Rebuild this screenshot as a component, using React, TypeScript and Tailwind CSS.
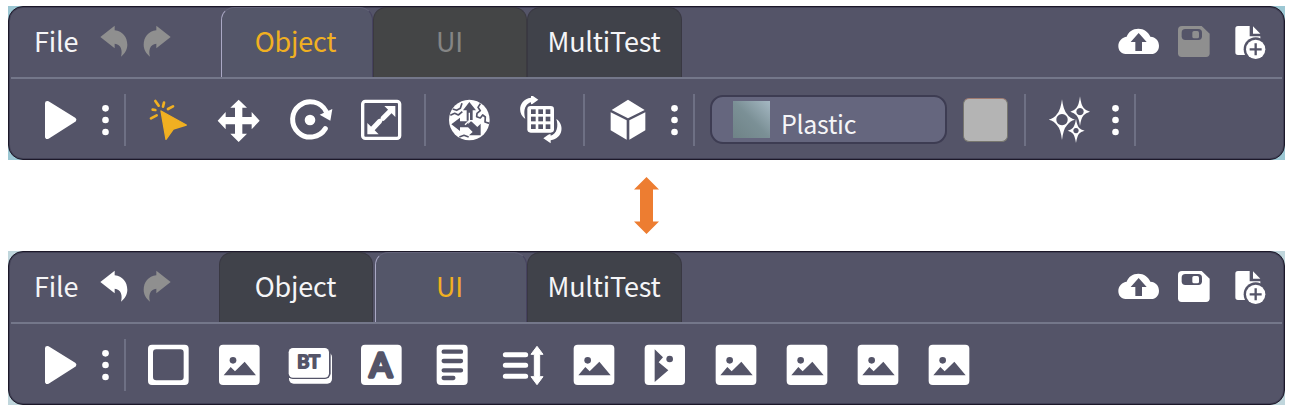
import type { ReactNode } from "react";

const BG = "#545468";

function Undo({ className = "" }: { className?: string }) {
  return (
    <svg className={`h-10 w-10 shrink-0 ${className}`} viewBox="282 66 120 120" fill="currentColor">
      <path d="M301 111 L344 77 V91 C368 93 382 112 382 134 C382 149 374 161 363 170 C368 152 364 133 344 131 V145 Z" />
    </svg>
  );
}

function HeadIcon({ x, children, className = "" }: { x: number; children: ReactNode; className?: string }) {
  return (
    <svg className={`size-12 shrink-0 ${className}`} viewBox={`${x} 54 144 144`} fill="currentColor">
      {children}
    </svg>
  );
}

function Cloud() {
  return (
    <HeadIcon x={42} className="text-white">
      <path d="M77 162 C63 162 55 151 55 138 C55 122 67 112 80 110 C85 95 98 86 115 86 C132 86 145 96 151 110 C167 111 177 122 177 137 C177 152 167 162 154 162 Z" />
      <path fill={BG} d="M116 99 L140 126 H126 V153 H106 V126 H92 Z" />
    </HeadIcon>
  );
}

function Save({ className }: { className: string }) {
  return (
    <HeadIcon x={210} className={className}>
      <path d="M246 78 H305 L329 101 V160 Q329 171 318 171 H245 Q234 171 234 160 V90 Q234 78 246 78 Z" />
      <rect x="245" y="87" width="61" height="33" rx="11" fill={BG} />
      <rect x="277" y="93" width="20" height="22" rx="5" />
    </HeadIcon>
  );
}

function NewFile() {
  return (
    <HeadIcon x={378} className="text-white">
      <path d="M414 78 H449 V109 H481 V165 H414 Q406 165 406 157 V86 Q406 78 414 78 Z" />
      <path d="M459 79 L481 101 H459 Z" />
      <circle cx="467" cy="148" r="36" fill={BG} />
      <circle cx="467" cy="148" r="29" />
      <path d="M467 130 V166 M449 148 H485" stroke={BG} strokeWidth="7" />
    </HeadIcon>
  );
}

function Tool({ x, children, className = "text-white" }: { x: number; children: ReactNode; className?: string }) {
  return (
    <svg className={`h-12 w-[71px] shrink-0 ${className}`} viewBox={`${x} 288 213 144`} fill="currentColor">
      {children}
    </svg>
  );
}

function Play() {
  return (
    <svg className="ml-[27px] size-12 shrink-0 text-white" viewBox="108 288 144 144" fill="currentColor" stroke="currentColor">
      <path d="M142 310 L222 359 L142 410 Z" strokeWidth="14" strokeLinejoin="round" />
    </svg>
  );
}

function Dots({ className }: { className: string }) {
  return (
    <svg className={`h-12 w-[11px] shrink-0 text-white ${className}`} viewBox="0 0 33 144" fill="currentColor">
      <circle cx="16.5" cy="37" r="10" />
      <circle cx="16.5" cy="72" r="10" />
      <circle cx="16.5" cy="108" r="10" />
    </svg>
  );
}

function Sep({ className }: { className: string }) {
  return <div className={`h-[52px] w-[2px] shrink-0 bg-[#6e7084] ${className}`} />;
}

function Cursor() {
  return (
    <Tool x={399} className="text-[#f1b021]">
      <path d="M483 333 L559 375 L520 387 L498 418 Z" stroke="currentColor" strokeWidth="4" strokeLinejoin="round" />
      <path
        d="M466 303 L476 317 M492 308 L489 320 M519 319 L504 327 M458 329 L466 330 M453 355 L470 346"
        stroke="currentColor"
        strokeWidth="8"
        strokeLinecap="round"
      />
    </Tool>
  );
}

function Move() {
  return (
    <Tool x={-18}>
      <path d="M86 299 L111 323 H97 V351 H125 V336 L149 362 L125 388 V373 H97 V401 H111 L86 426 L61 401 H75 V373 H47 V388 L23 362 L47 336 V351 H75 V323 H61 Z" />
    </Tool>
  );
}

function Rotate() {
  return (
    <Tool x={195}>
      <path d="M346 386 A53 53 0 1 1 348 334" fill="none" stroke="currentColor" strokeWidth="15" strokeLinecap="round" />
      <path d="M329 344 L367 327 L361 362 Z" />
      <circle cx="300" cy="360" r="16" />
    </Tool>
  );
}

function Scale() {
  return (
    <Tool x={408}>
      <rect x="458" y="304" width="111" height="111" rx="8" fill="none" stroke="currentColor" strokeWidth="10" />
      <path d="M556 318 V351 L523 318 Z M472 403 V369 L506 403 Z" />
      <path d="M543 331 L519 355 M509 364 L485 389" stroke="currentColor" strokeWidth="15" strokeLinecap="round" />
    </Tool>
  );
}

function Globe() {
  return (
    <Tool x={12}>
      <circle cx="118" cy="360" r="61" />
      <g fill="none" stroke={BG} strokeWidth="5" strokeLinejoin="round">
        <path d="M68 327 L80 331 L91 325 L96 310" />
        <path d="M61 346 L74 340 L85 345 L97 335" />
        <path d="M151 311 L144 322 L151 332 L141 340 L140 350 L151 354 L158 345 L166 351 L165 366 L178 370" />
        <path d="M88 411 L102 406 L116 411" />
      </g>
      <g fill={BG}>
        <path d="M118 306 L138 331 H128 V362 H110 V331 H99 Z" />
        <path d="M64 373 L90 353 V364 H115 V382 H90 V393 Z" />
        <path d="M123 363 L142 381 L152 371 V406 H117 L128 396 L110 377 Z" />
      </g>
      <path d="M118 338 V362 H140 M118 362 L105 374" fill="none" stroke="currentColor" strokeWidth="4" />
    </Tool>
  );
}

function GridRotate() {
  const arrow = "M286 357 C262 342 264 299 303 293 V284 L325 299 L303 315 V307 C284 312 279 336 286 357 Z";
  return (
    <Tool x={225}>
      <path d={arrow} />
      <path d={arrow} transform="rotate(180 332.5 357)" />
      <rect x="287" y="313" width="90" height="90" rx="14" fill={BG} />
      <rect x="292" y="318" width="80" height="80" rx="10" />
      {[303, 325, 347].map((x) =>
        [328, 350, 373].map((y) => <rect key={`${x}-${y}`} x={x} y={y} width="14" height="14" fill={BG} />),
      )}
    </Tool>
  );
}

function Cube() {
  return (
    <svg className="ml-[19px] size-12 shrink-0 text-white" viewBox="522 288 144 144" fill="currentColor">
      <path d="M594 299 L644 330 L594 355 L545 330 Z M542 337 L590 361 V419 L542 391 Z M598 361 L646 337 V391 L598 419 Z" />
    </svg>
  );
}

function Sparkles() {
  return (
    <svg className="ml-[19px] size-12 shrink-0 text-white" viewBox="315 48 144 144" fill="currentColor" fillRule="evenodd">
      <path d="M366 58 Q370 91 381 102 Q389 115 405 119 Q389 123 381 136 Q370 147 366 180 Q362 147 351 136 Q343 123 326 119 Q343 115 351 102 Q362 91 366 58 Z M366 102 a17 17 0 1 0 .1 0 Z" />
      <path d="M420 49 Q423 75 431 84 Q437 92 450 95 Q437 98 431 106 Q423 114 420 138 Q417 114 409 106 Q403 98 391 95 Q403 92 409 84 Q417 75 420 49 Z M420 84 a11 11 0 1 0 .1 0 Z" />
      <path d="M408 116 Q411 136 417 143 Q422 149 434 152 Q422 155 417 161 Q411 169 408 189 Q405 169 399 161 Q394 155 383 152 Q394 149 399 143 Q405 136 408 116 Z M408 144 a8 8 0 1 0 .1 0 Z" />
    </svg>
  );
}

function Frame() {
  return (
    <Tool x={399}>
      <path
        fillRule="evenodd"
        d="M456 299 H554 Q566 299 566 311 V408 Q566 420 554 420 H456 Q444 420 444 408 V311 Q444 299 456 299 Z M469 313 Q459 313 459 323 V396 Q459 406 469 406 H541 Q551 406 551 396 V323 Q551 313 541 313 Z"
      />
    </Tool>
  );
}

function Picture({ x = -18 }: { x?: number }) {
  return (
    <Tool x={x}>
      <rect x="27" y="299" width="122" height="121" rx="12" />
      <circle cx="69" cy="346" r="10" fill={BG} />
      <path fill={BG} d="M41 391 L62 366 L75 379 L104 350 L138 391 Z" />
    </Tool>
  );
}

function ButtonTool() {
  return (
    <Tool x={195}>
      <rect x="237" y="322" width="129" height="94" rx="14" />
      <rect x="231" y="304" width="131" height="98" rx="17" fill={BG} />
      <rect x="236" y="309" width="121" height="89" rx="13" />
      <text
        x="296"
        y="370"
        textAnchor="middle"
        textLength="68"
        lengthAdjust="spacingAndGlyphs"
        fill={BG}
        stroke={BG}
        strokeWidth="6"
        strokeLinejoin="round"
        className="font-['Lato',sans-serif] text-[51px] font-normal"
      >
        BT
      </text>
    </Tool>
  );
}

function TextTool() {
  return (
    <Tool x={408}>
      <rect x="453" y="299" width="122" height="121" rx="12" />
      <text
        x="512"
        y="396"
        textAnchor="middle"
        fill={BG}
        stroke={BG}
        strokeWidth="11"
        strokeLinejoin="round"
        className="font-['Lato',sans-serif] text-[100px] font-normal"
      >
        A
      </text>
    </Tool>
  );
}

function Doc() {
  return (
    <Tool x={-39}>
      <rect x="20" y="299" width="93" height="121" rx="12" />
      <path d="M41 320 H93 M41 348 H93 M41 376 H93 M41 399 H70" stroke={BG} strokeWidth="13" strokeLinecap="round" />
    </Tool>
  );
}

function Scroll() {
  return (
    <Tool x={174}>
      <path d="M226 329 H287 M226 361 H287 M226 394 H287" stroke="currentColor" strokeWidth="15" strokeLinecap="round" />
      <path d="M321 304 L339 328 H329 V395 H339 L321 419 L303 395 H313 V328 H303 Z" stroke="currentColor" strokeWidth="3" strokeLinejoin="round" />
    </Tool>
  );
}

function SidePicture() {
  return (
    <Tool x={600}>
      <rect x="644" y="299" width="121" height="121" rx="12" />
      <path fill={BG} d="M674 313 L699 337 L686 352 L715 376 L674 411 Z" />
      <circle cx="719" cy="342" r="10" fill={BG} />
    </Tool>
  );
}

type TabState = "active" | "normal" | "disabled";

function Tab({ label, state, width = "w-[154px]" }: { label: string; state: TabState; width?: string }) {
  const styles = {
    active: "border-l-[1.5px] border-t border-r border-l-[#aaa8c4] border-t-[#626178] border-r-[#46425f] bg-[#545669] text-[#f1b021]",
    normal: "border border-b-0 border-[#393842] bg-[#40424a] text-[#f5f5f7]",
    disabled: "border border-b-0 border-[#3b3a40] bg-[#444546] text-[#858585]",
  };
  const box = state === "active" ? "ml-[2px] w-[152px] pr-[3px]" : `${width} pr-[1px]`;
  return (
    <div
      className={`flex h-[70px] items-center justify-center rounded-t-[13px] pb-[5px] text-[27px] leading-none tracking-[-0.2px] ${box} ${styles[state]}`}
    >
      {label}
    </div>
  );
}

interface PanelProps {
  objectTab: TabState;
  uiTab: TabState;
  canEdit: boolean;
  corner: string;
  children: ReactNode;
}

function Panel({ objectTab, uiTab, canEdit, corner, children }: PanelProps) {
  return (
    <section className={`h-[154px] w-[1277px] ${corner}`}>
      <div className="flex h-full flex-col rounded-[15px] border border-[#1c1829] bg-[#545468] shadow-[inset_0_0_0_1px_#414055]">
        <header className="flex h-[70px] shrink-0 items-center">
          <span className="ml-[25px] w-[60px] pb-[3px] text-[27px] leading-none tracking-[-0.2px] text-[#f5f5f7]">File</span>
          <Undo className={canEdit ? "text-white" : "text-[#8f8f8f]"} />
          <Undo className="ml-[3px] -scale-x-100 text-[#8f8f8f]" />
          <nav className="ml-[42px] flex">
            <Tab label="Object" state={objectTab} />
            <Tab label="UI" state={uiTab} />
            <Tab label="MultiTest" state="normal" width="w-[155px]" />
          </nav>
          <div className="ml-auto flex gap-2 pr-[10px]">
            <Cloud />
            <Save className={canEdit ? "text-white" : "text-[#8f8f8f]"} />
            <NewFile />
          </div>
        </header>
        <div className="mx-[2px] h-[2px] shrink-0 bg-[#74778a]" />
        <div className="flex flex-1 items-center pt-[2px]">
          <Play />
          <Dots className="ml-4" />
          <Sep className="mr-[7px] ml-[13px]" />
          {children}
        </div>
      </div>
    </section>
  );
}

export default function App() {
  return (
    <main className="flex h-[416px] w-[1292px] flex-col items-start bg-white pt-[6px] pl-2 font-['Noto_Sans_CJK_KR',sans-serif]">
      <Panel objectTab="active" uiTab="disabled" canEdit={false} corner="bg-[#9cc7d3]">
        <Cursor />
        <Move />
        <Rotate />
        <Scale />
        <Sep className="mr-2 ml-[7px]" />
        <Globe />
        <GridRotate />
        <Sep className="ml-[7px]" />
        <Cube />
        <Dots className="ml-[17px]" />
        <Sep className="ml-[13px]" />
        <div className="mb-[1px] ml-[15px] flex h-[49px] w-[237px] items-center rounded-[13px] border-2 border-[#3d3c52] bg-[#65667e] pl-[21px]">
          <div className="size-[37px] bg-linear-to-bl from-[#a5b8c3] via-[#7b9096] to-[#6f8387]" />
          <span className="ml-[11px] pt-[7px] text-[25px] leading-none tracking-[-0.3px] text-[#f5f5f7]">Plastic</span>
        </div>
        <div className="ml-[16px] h-[44px] w-[45px] rounded-[6px] border border-[#77766f] border-t-[#a07b70] bg-[#b4b4b4]" />
        <Sep className="ml-4" />
        <Sparkles />
        <Dots className="ml-[17px]" />
        <Sep className="ml-[13px]" />
      </Panel>
      <svg className="my-[17px] ml-[625px] h-[57px] w-[27px]" viewBox="0 0 27 57" fill="#ed7d31">
        <path d="M13.5 0 L26 12.5 H20 V44.5 H26 L13.5 57 L1 44.5 H7 V12.5 H1 Z" />
      </svg>
      <Panel objectTab="normal" uiTab="active" canEdit corner="bg-[#c0d6dc]">
        <Frame />
        <Picture />
        <ButtonTool />
        <TextTool />
        <Doc />
        <Scroll />
        <Picture x={-17} />
        <SidePicture />
        <Picture x={-17} />
        <Picture x={-17} />
        <Picture x={-17} />
        <Picture x={-17} />
      </Panel>
    </main>
  );
}
